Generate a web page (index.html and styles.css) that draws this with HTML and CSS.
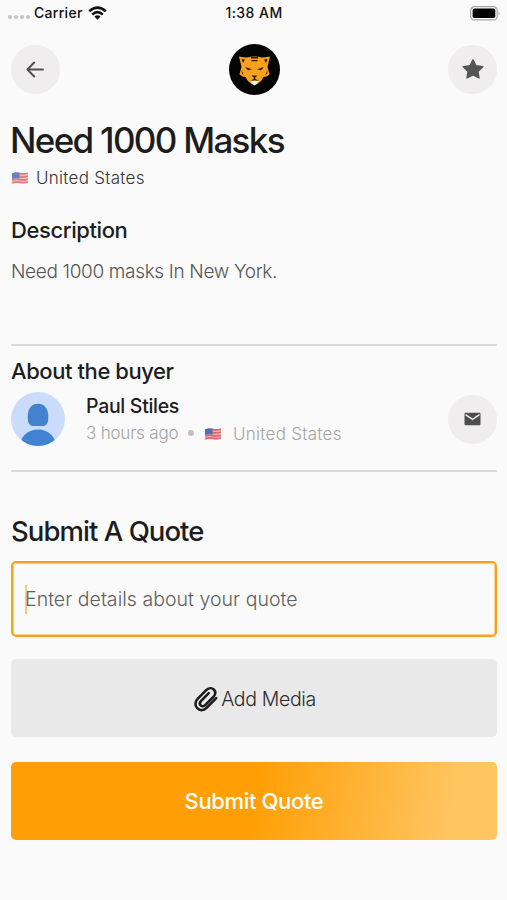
FILE: index.html
```html
<!DOCTYPE html>
<html lang="en">
<head>
<meta charset="utf-8">
<title>Need 1000 Masks</title>
<link rel="stylesheet" href="styles.css">
</head>
<body>
<svg class="defs" width="0" height="0" aria-hidden="true">
  <symbol id="flag" viewBox="0 0 16 12">
    <path d="M0 1.200Q4-.2 8 .8T16 .4V10.800Q12 12 8 11T0 11.600Z" fill="#f0b0b6"/>
    <path d="M0 2.200Q4 .8 8 1.600T16 1.200M0 5Q4 3.800 8 4.600T16 4.200M0 8Q4 6.800 8 7.600T16 7.200M0 10.800Q4 9.600 8 10.400T16 10" fill="none" stroke="#e0636d" stroke-width="1.600"/>
    <path d="M0 1.200Q3.500 0 7.500 .8V6.400Q3.500 5.800 0 7Z" fill="#4672ad"/>
  </symbol>
</svg>
<div class="status">
  <div class="carrier">
    <span class="dots"><i></i><i></i><i></i><i></i></span>
    <span class="carrier-name">Carrier</span>
    <svg class="wifi" viewBox="0 0 19 14"><g fill="none" stroke="#111" stroke-width="2.600"><path d="M1.200 5.300Q9.500-2.100 17.800 5.300"/><path d="M4.200 8.500Q9.500 3.900 14.800 8.500"/></g><path d="M6.400 10.600Q9.500 8 12.600 10.600L9.500 13.800Z" fill="#111"/></svg>
  </div>
  <span class="time">1:38 AM</span>
  <svg class="battery" viewBox="0 0 31 15"><rect x=".7" y=".7" width="26.500" height="13.200" rx="3.700" fill="none" stroke="#a5a5a5" stroke-width="1.200"/><rect x="2.600" y="2.600" width="22.700" height="9.400" rx="1.800" fill="#000"/><path d="M28.600 5.200Q30.500 7.300 28.600 9.400Z" fill="#999"/></svg>
</div>
<nav class="nav">
  <button class="circle" aria-label="Back"><svg width="19" height="18" viewBox="0 0 19 18"><path d="M17 8.500H1.600M8.200 1.500L1.400 8.500L8.200 15.500" fill="none" stroke="#505050" stroke-width="1.900" stroke-linecap="round" stroke-linejoin="round"/></svg></button>
  <svg class="logo" viewBox="0 0 51 51">
    <circle cx="25.500" cy="25.500" r="25.500" fill="#050505"/>
    <path d="M10 12.500Q15 13.500 18 13.500Q25.500 11.500 33 13.500Q36 13.500 41 12.500L39.300 19.500L38.500 23L40.500 30Q38.500 33 34.500 33L32 37L29 39.500H22L19 37L16.500 33Q12.500 33 10.500 30L12.500 23L11.700 19.500Z" fill="#f9a11b"/>
    <path d="M12.500 15L16 15.500L14 19ZM38.500 15L35 15.500L37 19ZM22 13H29V14.500H22ZM22.500 16H28.500V17.200H22.500ZM16 23L23 25.300L19 26.300ZM35 23L28 25.300L32 26.300ZM22.500 31.500H28.500L26.300 33.500V35L29.500 36.500H21.500L24.700 35V33.500ZM12.500 26L14.500 30.500L13 30ZM38.500 26L36.500 30.500L38 30Z" fill="#2a1b06"/>
    <path d="M21.500 37.500Q25.500 36 29.500 37.500L28 40L25.500 41.500L23 40Z" fill="#f4f4ee"/>
  </svg>
  <button class="circle" aria-label="Favourite"><svg width="22" height="21" viewBox="0 0 22 21"><path d="M11 .8L14 6.700L20.800 7.700L15.900 12.400L17 19L11 15.900L5 19L6.100 12.400L1.200 7.700L8 6.700Z" fill="#555" stroke="#555" stroke-width="1.400" stroke-linejoin="round"/></svg></button>
</nav>
<main>
  <h1><span>Need 1000 Masks</span></h1>
  <div class="place"><svg class="flag"><use href="#flag"/></svg><span class="country">United States</span></div>
  <h2 class="desc-title"><span>Description</span></h2>
  <p class="desc">Need 1000 masks In New York.</p>
  <section class="buyer">
    <h2 class="buyer-title">About the buyer</h2>
    <div class="buyer-row">
      <svg class="avatar" viewBox="0 0 54 54"><clipPath id="round"><circle cx="27" cy="27" r="27"/></clipPath><g clip-path="url(#round)"><rect width="54" height="54" fill="#cbdcfb"/><path d="M27 11.800C33 11.800 37.300 16 37.300 25C37.300 31.500 35.500 34 31 34H23C18.500 34 16.700 31.500 16.700 25C16.700 16 21 11.800 27 11.800Z" fill="#4382d1"/><ellipse cx="27" cy="54" rx="18" ry="16.500" fill="#4382d1"/></g></svg>
      <div class="who">
        <div class="name">Paul Stiles</div>
        <div class="meta"><span class="ago">3 hours ago</span><i class="dot"></i><svg class="flag"><use href="#flag"/></svg><span class="country">United States</span></div>
      </div>
      <button class="circle" aria-label="Message"><svg width="17" height="14" viewBox="0 0 17 14"><rect x=".5" y=".8" width="16" height="12.500" rx="1.200" fill="#4d4d4d"/><path d="M1.500 2.700L8.500 7.400L15.500 2.700" fill="none" stroke="#efeded" stroke-width="1.500"/></svg></button>
    </div>
  </section>
  <h2 class="quote-title">Submit A Quote</h2>
  <div class="field"><i class="caret"></i><span>Enter details about your quote</span></div>
  <button class="media"><svg width="26" height="26" viewBox="0 0 26 26"><path d="M23.200 12.200L13.800 21.600C10.800 24.600 7 25 4.200 22.200S2.200 15.200 4.800 12.600L13.200 4.200C15.600 1.800 18.700 1.500 20.800 3.500S22.700 8.600 20.600 10.700L12.200 19.100C10.700 20.600 8.900 20.500 7.700 19.300S6.700 16.200 8.100 14.800L15.800 7.100" fill="none" stroke="#1c1c1c" stroke-width="2.600" stroke-linecap="round"/></svg><span>Add Media</span></button>
  <button class="submit"><span>Submit Quote</span></button>
</main>
</body>
</html>
```
FILE: styles.css
```css
* { box-sizing: border-box; }
body { margin: 0; height: 900px; overflow: hidden; background: #fafafa; color: #1d1d1d; font-family: Inter, "Open Sans", sans-serif; white-space: nowrap; }
h1, h2, p { margin: 0; }
button { border: 0; padding: 0; margin: 0; font: inherit; color: inherit; }
svg { display: block; flex: none; }
.defs { display: none; }
.status { display: grid; grid-template-columns: 1fr auto 1fr; align-items: center; height: 26px; padding: 0 7px 0 8px; color: #111; font-size: 14px; font-weight: 500; }
.carrier { display: flex; align-items: center; margin-top: -1px; }
.dots { display: flex; gap: 2px; width: 26px; padding-top: 8px; }
.dots i { width: 4px; height: 4px; border-radius: 50%; background: #c4c4c4; }
.carrier-name { width: 54px; letter-spacing: .3px; }
.wifi { width: 19px; height: 14px; }
.time { margin-top: -1px; letter-spacing: .45px; }
.battery { width: 31px; height: 15px; margin: 0 -1px 0 0; justify-self: end; }
.nav { display: flex; justify-content: space-between; align-items: center; height: 51px; margin: 18px 10px 0 11px; }
.circle { display: flex; align-items: center; justify-content: center; flex: none; width: 49px; height: 49px; border-radius: 50%; background: #efeded; }
.logo { width: 51px; height: 51px; }
main { padding: 0 10px 0 11px; }
h1 { margin-top: 20px; margin-left: -1px; height: 50px; line-height: 50px; font-size: 35px; font-weight: 500; letter-spacing: -1.700px; }
h2 { font-weight: 500; font-size: 22px; line-height: 30px; }
.place { display: flex; align-items: center; height: 26px; }
.flag { width: 16px; height: 12px; }
.place .flag { margin: 0 8px 0 1px; opacity: .85; }
.country { font-size: 17px; font-weight: 300; letter-spacing: .28px; }
.place .country { color: #333; }
.desc-title { margin-top: 24px; letter-spacing: -.4px; }
.desc { margin-top: 14px; line-height: 26px; font-size: 19px; font-weight: 300; color: #555; letter-spacing: -.34px; }
.buyer { margin-top: 59px; height: 128px; border-top: 2px solid #dadada; border-bottom: 2px solid #dadada; }
.buyer-title { margin-top: 10px; letter-spacing: -.43px; }
.buyer-row { display: flex; align-items: center; height: 54px; margin-top: 6px; }
.avatar { width: 54px; height: 54px; }
.who { flex: 1; margin-left: 21px; }
.name { height: 28px; padding-top: 1px; line-height: 28px; font-size: 19.500px; font-weight: 500; letter-spacing: -.3px; }
.meta { display: flex; align-items: center; height: 28px; color: #a4a4a4; }
.ago { width: 102px; font-size: 17px; font-weight: 300; letter-spacing: -.2px; }
.dot { width: 6px; height: 6px; border-radius: 50%; background: #c2c2c2; }
.meta .flag { margin: 2px 12px 0 11px; }
.meta .country { padding-top: 2px; }
.quote-title { margin-top: 40px; height: 38px; line-height: 38px; font-size: 27.500px; letter-spacing: -.95px; }
.field { display: flex; align-items: center; height: 76px; margin-top: 11px; padding-left: 12px; border: 2px solid #f6a21c; border-radius: 5px; box-shadow: inset 0 0 0 1px #fbd08f; color: #606060; font-size: 19.500px; font-weight: 300; letter-spacing: .04px; }
.caret { width: 2px; height: 29px; margin-right: -2px; background: #fdc779; }
.media, .submit { display: flex; align-items: center; justify-content: center; width: 100%; height: 78px; border-radius: 5px; }
.media { margin-top: 22px; padding: 1px 0 0 1px; background: #e9e9e9; color: #2d2d2d; font-size: 19.500px; font-weight: 300; letter-spacing: -.36px; }
.media svg { margin-right: 2px; }
.submit { margin-top: 25px; background: linear-gradient(100deg, #ff9f05 50%, #ffc561 90%); color: #fff; font-size: 22px; font-weight: 500; letter-spacing: -.35px; }
```
